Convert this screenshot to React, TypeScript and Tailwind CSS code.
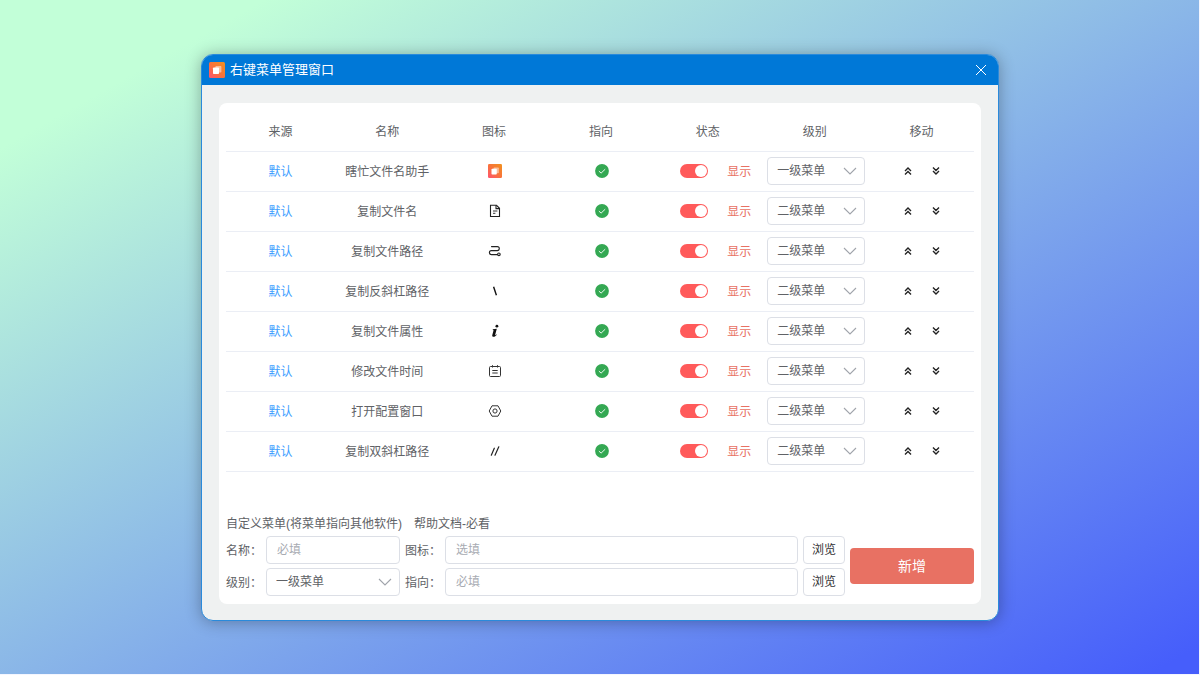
import { useState } from "react";
import type { ReactNode } from "react";

interface MenuItem {
  name: string;
  icon: ReactNode;
  visible: boolean;
  level: string;
}

const levels = ["一级菜单", "二级菜单"];

const columns = ["来源", "名称", "图标", "指向", "状态", "级别", "移动"];

const AppLogo = ({ className }: { className: string }) => (
  <svg viewBox="0 0 16 16" className={className} aria-hidden="true">
    <defs>
      <linearGradient id="logo" x1="0" y1="1" x2="1" y2="0">
        <stop offset="0" stopColor="#ff5470" />
        <stop offset="0.5" stopColor="#f9733a" />
        <stop offset="1" stopColor="#f0921e" />
      </linearGradient>
    </defs>
    <rect width="16" height="16" rx="1.5" fill="url(#logo)" />
    <rect x="6.4" y="4" width="6" height="6.6" rx="0.8" fill="#fff" opacity="0.5" />
    <rect x="4" y="5.4" width="6" height="6.6" rx="0.8" fill="#fff" />
  </svg>
);

const FileIcon = () => (
  <svg
    viewBox="0 0 14 14"
    className="size-3.5"
    fill="none"
    stroke="#222"
    strokeWidth="1.1"
    aria-hidden="true"
  >
    <path d="M2.5 1.3h6l3 3v8.2h-9z" />
    <path d="M8 1.3v3.3h3.5" />
    <path d="M5 7h4.4M5 9.3h2.4" strokeWidth="0.9" />
  </svg>
);

const PathIcon = () => (
  <svg
    viewBox="0 0 14 14"
    className="size-3.5"
    fill="none"
    stroke="#222"
    strokeWidth="1.1"
    strokeLinecap="round"
    aria-hidden="true"
  >
    <path d="M3.5 2.6h5.8a2 2 0 0 1 0 4H3.4a2 2 0 0 0 0 4h6" />
    <circle cx="10.9" cy="10.3" r="1.3" />
  </svg>
);

const BackslashIcon = () => (
  <svg
    viewBox="0 0 14 14"
    className="size-3.5"
    stroke="#111"
    strokeWidth="1.4"
    aria-hidden="true"
  >
    <path d="M5.6 2.8l2.8 8.4" />
  </svg>
);

const InfoIcon = () => (
  <svg viewBox="0 0 14 14" className="size-3.5" fill="#111" aria-hidden="true">
    <circle cx="8.9" cy="2.2" r="1.4" />
    <path d="M4.8 5.3l4-.6-1.7 6.2c-.1.5.2.5.5.2l.8-.8.3.4c-1 1.4-2 2.1-3.1 2.1-1.2 0-1.6-.8-1.3-1.9l1.2-4.3c.1-.4 0-.6-.4-.7l-.4-.1z" />
  </svg>
);

const CalendarIcon = () => (
  <svg
    viewBox="0 0 14 14"
    className="size-3.5"
    fill="none"
    stroke="#333"
    aria-hidden="true"
  >
    <rect x="1.5" y="2.5" width="11" height="10" rx="1" />
    <path d="M4.5 1.2v2.3M9.5 1.2v2.3M4.3 6.5h5.4M4.3 9h5.4" />
  </svg>
);

const SettingIcon = () => (
  <svg
    viewBox="0 0 14 14"
    className="size-3.5"
    fill="none"
    stroke="#333"
    strokeLinejoin="round"
    aria-hidden="true"
  >
    <path d="M4 1.8h6L12.8 7 10 12.2H4L1.2 7z" />
    <circle cx="7" cy="7" r="2.1" />
  </svg>
);

const DoubleSlashIcon = () => (
  <svg
    viewBox="0 0 14 14"
    className="size-3.5"
    stroke="#222"
    strokeWidth="1.2"
    strokeLinecap="round"
    aria-hidden="true"
  >
    <path d="M6.3 4.2l-3 7M10.8 2.8l-3.8 8.4" />
  </svg>
);

const CheckIcon = () => (
  <svg viewBox="0 0 14 14" className="size-3.5" role="img" aria-label="正常">
    <circle cx="7" cy="7" r="6.9" fill="#34a853" />
    <path d="M3.9 7.1l2.2 2 4.1-3.9" fill="none" stroke="#fff" strokeWidth="0.9" />
  </svg>
);

const DoubleChevron = ({ d }: { d: string }) => (
  <svg
    viewBox="0 0 8 8"
    className="size-2"
    fill="none"
    stroke="#222"
    strokeWidth="1.4"
    aria-hidden="true"
  >
    <path d={d} />
  </svg>
);

const initialItems: MenuItem[] = [
  {
    name: "瞎忙文件名助手",
    icon: <AppLogo className="size-3.5" />,
    visible: true,
    level: "一级菜单",
  },
  { name: "复制文件名", icon: <FileIcon />, visible: true, level: "二级菜单" },
  { name: "复制文件路径", icon: <PathIcon />, visible: true, level: "二级菜单" },
  { name: "复制反斜杠路径", icon: <BackslashIcon />, visible: true, level: "二级菜单" },
  { name: "复制文件属性", icon: <InfoIcon />, visible: true, level: "二级菜单" },
  { name: "修改文件时间", icon: <CalendarIcon />, visible: true, level: "二级菜单" },
  { name: "打开配置窗口", icon: <SettingIcon />, visible: true, level: "二级菜单" },
  { name: "复制双斜杠路径", icon: <DoubleSlashIcon />, visible: true, level: "二级菜单" },
];

interface LevelSelectProps {
  id?: string;
  label?: string;
  value: string;
  onChange: (value: string) => void;
}

const LevelSelect = ({ id, label, value, onChange }: LevelSelectProps) => (
  <div className="relative w-full">
    <select
      id={id}
      aria-label={label}
      value={value}
      onChange={(e) => onChange(e.target.value)}
      className="block h-7 w-full appearance-none rounded border border-[#dcdfe6] bg-white pr-7 pl-[9px] text-xs text-[#606266] focus:outline-none"
    >
      {levels.map((level) => (
        <option key={level}>{level}</option>
      ))}
    </select>
    <svg
      viewBox="0 0 14 8"
      className="pointer-events-none absolute top-2.5 right-2 h-2 w-3.5"
      fill="none"
      stroke="#a0a4ab"
      strokeWidth="1.1"
      aria-hidden="true"
    >
      <path d="M1 1l6 6 6-6" />
    </svg>
  </div>
);

const inputClass =
  "h-7 w-full min-w-0 rounded border border-[#dcdfe6] bg-white px-2.5 text-xs text-[#606266] placeholder:text-[#a8abb2] focus:outline-none";

const browseClass =
  "ml-[5px] h-7 w-[42px] rounded border border-[#dcdfe6] bg-white text-xs text-[#303133]";

const App = () => {
  const [items, setItems] = useState(initialItems);
  const [newLevel, setNewLevel] = useState("一级菜单");

  const updateItem = (index: number, patch: Partial<MenuItem>) => {
    setItems(items.map((item, i) => (i === index ? { ...item, ...patch } : item)));
  };

  const moveItem = (index: number, step: number) => {
    const target = index + step;
    if (target < 0 || target >= items.length) return;
    const next = [...items];
    [next[index], next[target]] = [next[target], next[index]];
    setItems(next);
  };

  return (
    <div className="flex min-h-screen bg-[#f4f6ff] pr-px pb-px font-['Liberation_Sans','Noto_Sans_CJK_SC',sans-serif] text-xs text-[#606266]">
      <div className="flex-1 bg-[linear-gradient(to_bottom_right,#c2ffd8_11%,#465efb_98%)] pt-[54px] pr-[200px] pb-8 pl-[201px]">
        <main className="overflow-hidden rounded-xl border border-[#2a8adb] bg-[#eff1f1] shadow-[0_1px_16px_rgba(0,0,0,0.3)]">
          {/* Title bar */}
          <header className="flex h-[30px] items-center justify-between bg-[#0078d7] pr-[11px] pl-[7px]">
            <div className="flex items-center gap-[5px]">
              <AppLogo className="size-4" />
              <h1 className="text-[13px] leading-5 text-white">右键菜单管理窗口</h1>
            </div>
            <button aria-label="关闭">
              <svg viewBox="0 0 12 12" className="size-3" stroke="#fff" aria-hidden="true">
                <path d="M1 1l10 10M11 1L1 11" />
              </svg>
            </button>
          </header>

          <div className="px-[17px] pt-[18px] pb-4">
            <div className="rounded-lg bg-white px-[7px] pt-2 pb-2">
              {/* Menu list */}
              <table className="w-full table-fixed text-center">
                <thead>
                  <tr className="h-10 border-b border-[#ebeef5]">
                    {columns.map((column) => (
                      <th key={column} className="pt-0.5 pl-0.5 font-normal">
                        {column}
                      </th>
                    ))}
                  </tr>
                </thead>
                <tbody>
                  {items.map((item, index) => (
                    <tr key={item.name} className="h-10 border-b border-[#ebeef5]">
                      <td className="pt-0.5 pl-0.5 text-[#409eff]">默认</td>
                      <td className="pt-0.5 pl-0.5">{item.name}</td>
                      <td>
                        <div className="flex justify-center pl-1">{item.icon}</div>
                      </td>
                      <td>
                        <div className="flex justify-center pl-1">
                          <CheckIcon />
                        </div>
                      </td>
                      <td>
                        <label className="flex items-center justify-end gap-[19px] pr-[9px] text-[#e87163]">
                          <input
                            type="checkbox"
                            role="switch"
                            checked={item.visible}
                            onChange={(e) => updateItem(index, { visible: e.target.checked })}
                            className="h-3.5 w-7 appearance-none rounded-full bg-[#c0c4cc] before:m-px before:block before:size-3 before:rounded-full before:bg-white checked:bg-[#ff5a5a] checked:before:ml-[15px]"
                          />
                          <span className="pt-0.5">{item.visible ? "显示" : "隐藏"}</span>
                        </label>
                      </td>
                      <td className="pr-0.5 pl-[7px]">
                        <LevelSelect
                          label={`${item.name}级别`}
                          value={item.level}
                          onChange={(level) => updateItem(index, { level })}
                        />
                      </td>
                      <td>
                        <div className="flex items-center justify-center gap-5 pl-0.5">
                          <button aria-label="上移" onClick={() => moveItem(index, -1)}>
                            <DoubleChevron d="M1 4l3-3 3 3M1 7.5l3-3 3 3" />
                          </button>
                          <button aria-label="下移" onClick={() => moveItem(index, 1)}>
                            <DoubleChevron d="M1 .5l3 3 3-3M1 4l3 3 3-3" />
                          </button>
                        </div>
                      </td>
                    </tr>
                  ))}
                </tbody>
              </table>

              {/* Custom menu */}
              <div className="mt-10 flex gap-3 leading-6">
                <h2>自定义菜单(将菜单指向其他软件)</h2>
                <a href="#help">帮助文档-必看</a>
              </div>
              <form
                className="flex items-center gap-[5px]"
                onSubmit={(e) => e.preventDefault()}
              >
                <div className="grid flex-1 grid-cols-[40px_134px_45px_1fr_47px] items-center gap-y-1">
                  <label htmlFor="name" className="pt-0.5">
                    名称：
                  </label>
                  <input id="name" placeholder="必填" className={inputClass} />
                  <label htmlFor="icon" className="pt-0.5 pl-[5px]">
                    图标：
                  </label>
                  <input id="icon" placeholder="选填" className={inputClass} />
                  <button type="button" className={browseClass}>
                    浏览
                  </button>

                  <label htmlFor="level" className="pt-0.5">
                    级别：
                  </label>
                  <LevelSelect id="level" value={newLevel} onChange={setNewLevel} />
                  <label htmlFor="target" className="pt-0.5 pl-[5px]">
                    指向：
                  </label>
                  <input id="target" placeholder="必填" className={inputClass} />
                  <button type="button" className={browseClass}>
                    浏览
                  </button>
                </div>
                <button
                  type="submit"
                  className="h-9 w-[124px] rounded bg-[#e87163] text-sm text-white"
                >
                  新增
                </button>
              </form>
            </div>
          </div>
        </main>
      </div>
    </div>
  );
};

export default App;
